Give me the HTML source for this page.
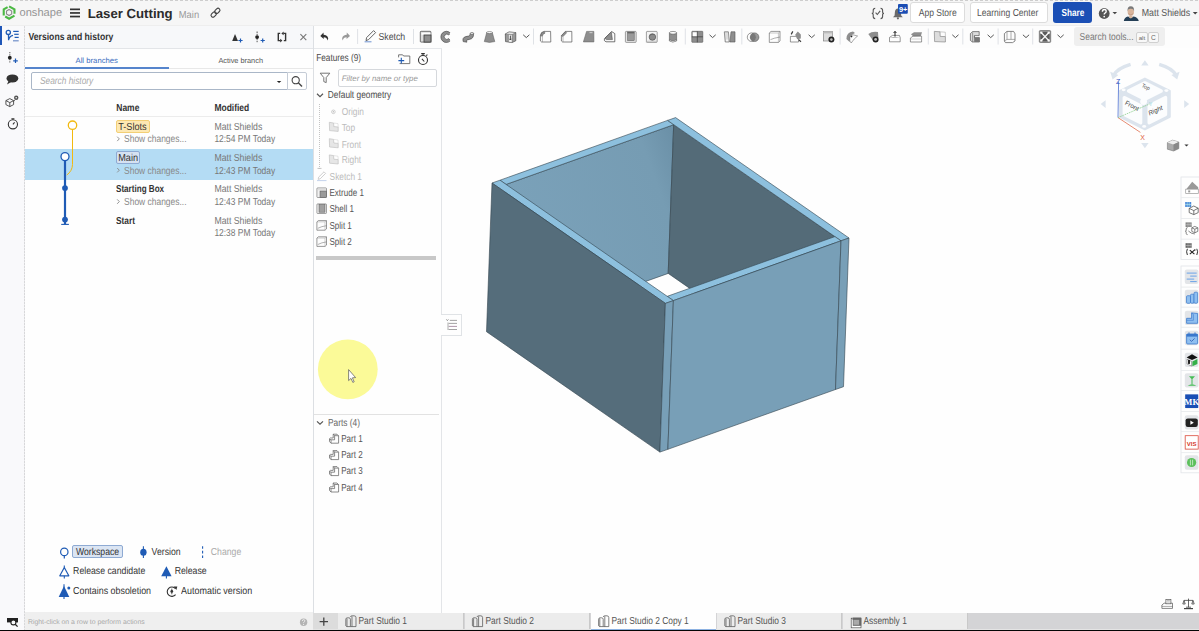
<!DOCTYPE html>
<html><head><meta charset="utf-8">
<style>
html,body{margin:0;padding:0;width:1199px;height:631px;overflow:hidden;background:#fefefe;font-family:"Liberation Sans",sans-serif;}
.t{position:absolute;white-space:nowrap;line-height:1;text-rendering:geometricPrecision;}
.r{position:absolute;}
.s{position:absolute;overflow:visible;}
</style></head><body>

<div class="r" style="left:0px;top:0px;width:1199px;height:25px;background:#f6f6f6;"></div>
<div class="r" style="left:0px;top:0px;width:1199px;height:1px;background:repeating-linear-gradient(90deg,#cdcdcd 0 3px,transparent 3px 5px);"></div>
<div class="r" style="left:0px;top:25px;width:1199px;height:1px;background:#eeeeee;"></div>
<div class="r" style="left:313px;top:26px;width:886px;height:22px;background:#fdfdfd;"></div>
<div class="r" style="left:0px;top:26px;width:24px;height:604px;background:#f9f9fb;"></div>
<div class="r" style="left:24px;top:26px;width:1px;height:604px;background:repeating-linear-gradient(180deg,#d8d8da 0 2px,#ececee 2px 3px);"></div>
<div class="r" style="left:0px;top:26px;width:2px;height:19px;background:#1f56b8;"></div>
<div class="r" style="left:25px;top:26px;width:288px;height:23px;background:#f7f8fa;"></div>
<div class="r" style="left:25px;top:48px;width:288px;height:1px;background:#e3e5e8;"></div>
<div class="r" style="left:25px;top:49px;width:288px;height:564px;background:#fefefe;"></div>
<div class="r" style="left:313px;top:26px;width:1px;height:587px;background:#dcdfe3;"></div>
<div class="r" style="left:25px;top:67px;width:144px;height:2px;background:#5584cc;"></div>
<div class="r" style="left:169px;top:68px;width:144px;height:1px;background:#e8e8e8;"></div>
<div class="r" style="left:31px;top:72px;width:257px;height:18px;background:#fff;border:1px solid #aab7c8;border-radius:2px 0 0 2px;box-sizing:border-box;"></div>
<div class="r" style="left:287px;top:72px;width:20px;height:18px;background:#fff;border:1px solid #c5ccd6;border-radius:0 2px 2px 0;box-sizing:border-box;"></div>
<div class="r" style="left:25px;top:116px;width:288px;height:1px;background:#ececec;"></div>
<div class="r" style="left:25px;top:149px;width:288px;height:31px;background:#b4dcf4;"></div>
<div class="r" style="left:116px;top:120px;width:34px;height:13px;background:#fde8b2;border:1px solid #f2cf76;border-radius:2px;box-sizing:border-box;"></div>
<div class="r" style="left:116px;top:151px;width:24px;height:13px;background:#d5e1f1;border:1px solid #8eaad3;border-radius:2px;box-sizing:border-box;"></div>
<div class="r" style="left:72px;top:545px;width:51px;height:13px;background:#dbe5f3;border:1px solid #8eaad3;border-radius:2px;box-sizing:border-box;"></div>
<div class="r" style="left:25px;top:612px;width:288px;height:18px;background:#efefef;"></div>
<div class="r" style="left:314px;top:48px;width:128px;height:565px;background:#fefefe;"></div>
<div class="r" style="left:441px;top:48px;width:1px;height:565px;background:#e3e5e8;"></div>
<div class="r" style="left:314px;top:48px;width:128px;height:1px;background:#e6e8eb;"></div>
<div class="r" style="left:338px;top:69px;width:99px;height:18px;background:#fff;border:1px solid #d5d8dc;border-radius:2px;box-sizing:border-box;"></div>
<div class="r" style="left:313px;top:613px;width:886px;height:17px;background:#d4d4d6;"></div>
<div class="r" style="left:313px;top:629px;width:886px;height:1px;background:#e4e4e4;"></div>
<div class="r" style="left:0px;top:630px;width:1199px;height:1px;background:#050505;"></div>
<div class="r" style="left:910px;top:2px;width:55px;height:21px;background:#fff;border:1px solid #dcdcdc;border-radius:3px;box-sizing:border-box;"></div>
<div class="r" style="left:970px;top:2px;width:78px;height:21px;background:#fff;border:1px solid #dcdcdc;border-radius:3px;box-sizing:border-box;"></div>
<div class="r" style="left:1053px;top:2px;width:39px;height:21px;background:#1b4fb5;border-radius:3px;"></div>
<div class="r" style="left:1074px;top:27px;width:91px;height:19px;background:#efefef;border-radius:3px;"></div>
<div class="r" style="left:1136px;top:32px;width:12px;height:11px;background:#f8f8f8;border:1px solid #d0d0d0;border-radius:2px;box-sizing:border-box;"></div>
<div class="r" style="left:1148px;top:32px;width:11px;height:11px;background:#f8f8f8;border:1px solid #d0d0d0;border-radius:2px;box-sizing:border-box;"></div>
<svg class="s" style="left:0px;top:0px;" width="1199" height="631" viewBox="0 0 1199 631"><defs><linearGradient id="gb" gradientUnits="userSpaceOnUse" x1="506" y1="184" x2="673" y2="124"><stop offset="0" stop-color="#7aa1b9"/><stop offset="0.8" stop-color="#769cb3"/><stop offset="1" stop-color="#6a8fa6"/></linearGradient></defs><polygon points="506.1,184.4 673.7,124.7 668.2,273.4 500.6,333.1" fill="url(#gb)" stroke="#33434d" stroke-width="0.6" stroke-linejoin="round"/><polygon points="673.7,124.7 834.9,236.6 829.4,385.3 668.2,273.4" fill="#546b78" stroke="#33434d" stroke-width="0.6" stroke-linejoin="round"/><polygon points="500.0,180.2 667.6,120.4 673.7,124.7 506.1,184.4" fill="#8dc0de" stroke="#33434d" stroke-width="0.6" stroke-linejoin="round"/><polygon points="675.6,117.6 849.0,238.0 841.0,240.8 667.6,120.4" fill="#8dc0de" stroke="#33434d" stroke-width="0.6" stroke-linejoin="round"/><polygon points="673.4,300.6 841.0,240.8 834.9,236.6 667.3,296.3" fill="#8dc0de" stroke="#33434d" stroke-width="0.6" stroke-linejoin="round"/><polygon points="492.0,183.0 665.4,303.4 673.4,300.6 500.0,180.2" fill="#8dc0de" stroke="#33434d" stroke-width="0.6" stroke-linejoin="round"/><polygon points="492.0,183.0 665.4,303.4 659.9,452.1 486.5,331.7" fill="#556d7b" stroke="#33434d" stroke-width="0.6" stroke-linejoin="round"/><polygon points="665.4,303.4 673.4,300.6 667.9,449.3 659.9,452.1" fill="#789fb7" stroke="#33434d" stroke-width="0.6" stroke-linejoin="round"/><polygon points="673.4,300.6 841.0,240.8 835.5,389.5 667.9,449.3" fill="#789fb7" stroke="#33434d" stroke-width="0.6" stroke-linejoin="round"/><polygon points="841.0,240.8 849.0,238.0 843.5,386.7 835.5,389.5" fill="#789fb7" stroke="#33434d" stroke-width="0.6" stroke-linejoin="round"/></svg>
<div class="t" style="left:19.50px;top:8.00px;font-size:11.1px;color:#949494;">onshape</div>
<div class="t" style="left:87.70px;top:7.00px;font-size:13.2px;color:#2b2b2b;font-weight:bold;">Laser Cutting</div>
<div class="t" style="left:178.80px;top:10.00px;font-size:9.4px;color:#9a9a9a;transform:scaleY(1.082);transform-origin:0 8px;">Main</div>
<div class="t" style="left:28.50px;top:33.00px;font-size:8.64px;color:#333;font-weight:bold;transform:scaleY(1.178);transform-origin:0 7px;">Versions and history</div>
<div class="t" style="left:75.50px;top:57.00px;font-size:7.72px;color:#3b6dbf;">All branches</div>
<div class="t" style="left:218.40px;top:57.00px;font-size:7.37px;color:#555;">Active branch</div>
<div class="t" style="left:40.00px;top:77.00px;font-size:8.34px;color:#aaa;font-style:italic;transform:scaleY(1.22);transform-origin:0 7px;">Search history</div>
<div class="t" style="left:116.30px;top:104.00px;font-size:8.48px;color:#333;font-weight:bold;transform:scaleY(1.2);transform-origin:0 7px;">Name</div>
<div class="t" style="left:214.40px;top:104.00px;font-size:8.49px;color:#333;font-weight:bold;transform:scaleY(1.198);transform-origin:0 7px;">Modified</div>
<div class="t" style="left:214.40px;top:123.00px;font-size:8.71px;color:#777;transform:scaleY(1.168);transform-origin:0 7px;">Matt Shields</div>
<div class="t" style="left:214.40px;top:135.00px;font-size:8.45px;color:#777;transform:scaleY(1.204);transform-origin:0 7px;">12:54 PM Today</div>
<div class="t" style="left:214.40px;top:154.00px;font-size:8.71px;color:#777;transform:scaleY(1.168);transform-origin:0 7px;">Matt Shields</div>
<div class="t" style="left:214.40px;top:167.00px;font-size:8.45px;color:#777;transform:scaleY(1.204);transform-origin:0 7px;">12:43 PM Today</div>
<div class="t" style="left:214.40px;top:185.00px;font-size:8.71px;color:#777;transform:scaleY(1.168);transform-origin:0 7px;">Matt Shields</div>
<div class="t" style="left:214.40px;top:198.00px;font-size:8.45px;color:#777;transform:scaleY(1.204);transform-origin:0 7px;">12:43 PM Today</div>
<div class="t" style="left:214.40px;top:217.00px;font-size:8.71px;color:#777;transform:scaleY(1.168);transform-origin:0 7px;">Matt Shields</div>
<div class="t" style="left:214.40px;top:229.00px;font-size:8.45px;color:#777;transform:scaleY(1.204);transform-origin:0 7px;">12:38 PM Today</div>
<div class="t" style="left:118.20px;top:123.00px;font-size:9.16px;color:#333;transform:scaleY(1.111);transform-origin:0 7px;">T-Slots</div>
<div class="t" style="left:118.20px;top:154.00px;font-size:9.16px;color:#333;transform:scaleY(1.111);transform-origin:0 7px;">Main</div>
<div class="t" style="left:116.00px;top:186.00px;font-size:8.1px;color:#333;font-weight:bold;transform:scaleY(1.256);transform-origin:0 6px;">Starting Box</div>
<div class="t" style="left:116.00px;top:217.00px;font-size:8.35px;color:#333;font-weight:bold;transform:scaleY(1.218);transform-origin:0 7px;">Start</div>
<div class="t" style="left:124.10px;top:135.00px;font-size:8.45px;color:#888;transform:scaleY(1.204);transform-origin:0 7px;">Show changes...</div>
<div class="t" style="left:124.10px;top:167.00px;font-size:8.45px;color:#888;transform:scaleY(1.204);transform-origin:0 7px;">Show changes...</div>
<div class="t" style="left:124.10px;top:198.00px;font-size:8.45px;color:#888;transform:scaleY(1.204);transform-origin:0 7px;">Show changes...</div>
<div class="t" style="left:75.90px;top:548.00px;font-size:8.7px;color:#333;transform:scaleY(1.169);transform-origin:0 7px;">Workspace</div>
<div class="t" style="left:151.60px;top:548.00px;font-size:8.7px;color:#333;transform:scaleY(1.169);transform-origin:0 7px;">Version</div>
<div class="t" style="left:210.80px;top:548.00px;font-size:8.7px;color:#aaa;transform:scaleY(1.169);transform-origin:0 7px;">Change</div>
<div class="t" style="left:73.10px;top:567.00px;font-size:8.73px;color:#333;transform:scaleY(1.165);transform-origin:0 7px;">Release candidate</div>
<div class="t" style="left:174.70px;top:567.00px;font-size:8.73px;color:#333;transform:scaleY(1.165);transform-origin:0 7px;">Release</div>
<div class="t" style="left:73.10px;top:587.00px;font-size:8.89px;color:#333;transform:scaleY(1.144);transform-origin:0 7px;">Contains obsoletion</div>
<div class="t" style="left:181.00px;top:587.00px;font-size:8.97px;color:#333;transform:scaleY(1.134);transform-origin:0 7px;">Automatic version</div>
<div class="t" style="left:28.00px;top:620.00px;font-size:6.87px;color:#a8a8a8;">Right-click on a row to perform actions</div>
<div class="t" style="left:378.50px;top:33.00px;font-size:8.71px;color:#4a4a4a;transform:scaleY(1.168);transform-origin:0 7px;">Sketch</div>
<div class="t" style="left:316.20px;top:55.00px;font-size:8.24px;color:#4a4a4a;transform:scaleY(1.235);transform-origin:0 6px;">Features (9)</div>
<div class="t" style="left:341.80px;top:75.00px;font-size:7.87px;color:#999;font-style:italic;">Filter by name or type</div>
<div class="t" style="left:327.80px;top:91.00px;font-size:8.33px;color:#4a4a4a;transform:scaleY(1.221);transform-origin:0 7px;">Default geometry</div>
<div class="t" style="left:341.70px;top:108.00px;font-size:8.33px;color:#bbb;transform:scaleY(1.221);transform-origin:0 7px;">Origin</div>
<div class="t" style="left:341.70px;top:124.00px;font-size:8.33px;color:#bbb;transform:scaleY(1.221);transform-origin:0 7px;">Top</div>
<div class="t" style="left:341.70px;top:141.00px;font-size:8.33px;color:#bbb;transform:scaleY(1.221);transform-origin:0 7px;">Front</div>
<div class="t" style="left:341.70px;top:156.00px;font-size:8.33px;color:#bbb;transform:scaleY(1.221);transform-origin:0 7px;">Right</div>
<div class="t" style="left:329.60px;top:173.00px;font-size:8.33px;color:#bbb;transform:scaleY(1.221);transform-origin:0 7px;">Sketch 1</div>
<div class="t" style="left:329.50px;top:190.00px;font-size:8.04px;color:#555;transform:scaleY(1.265);transform-origin:0 6px;">Extrude 1</div>
<div class="t" style="left:329.50px;top:206.00px;font-size:8.04px;color:#555;transform:scaleY(1.265);transform-origin:0 6px;">Shell 1</div>
<div class="t" style="left:329.50px;top:223.00px;font-size:8.04px;color:#555;transform:scaleY(1.265);transform-origin:0 6px;">Split 1</div>
<div class="t" style="left:329.50px;top:239.00px;font-size:8.04px;color:#555;transform:scaleY(1.265);transform-origin:0 6px;">Split 2</div>
<div class="r" style="left:316px;top:256px;width:120px;height:4px;background:#c8c8c8;"></div>
<div class="r" style="left:314px;top:414px;width:125px;height:1px;background:#e2e2e2;"></div>
<div class="t" style="left:328.00px;top:419.00px;font-size:8.33px;color:#666;transform:scaleY(1.221);transform-origin:0 7px;">Parts (4)</div>
<div class="t" style="left:341.20px;top:436.00px;font-size:8.04px;color:#555;transform:scaleY(1.265);transform-origin:0 6px;">Part 1</div>
<div class="t" style="left:341.20px;top:452.00px;font-size:8.04px;color:#555;transform:scaleY(1.265);transform-origin:0 6px;">Part 2</div>
<div class="t" style="left:341.20px;top:468.00px;font-size:8.04px;color:#555;transform:scaleY(1.265);transform-origin:0 6px;">Part 3</div>
<div class="t" style="left:341.20px;top:485.00px;font-size:8.04px;color:#555;transform:scaleY(1.265);transform-origin:0 6px;">Part 4</div>
<div class="r" style="left:313px;top:613px;width:25px;height:16px;background:#dcdcdc;"></div>
<div class="r" style="left:338px;top:613px;width:126px;height:16px;background:#ececec;"></div>
<div class="r" style="left:463px;top:613px;width:1px;height:16px;background:#c9c9c9;"></div>
<div class="t" style="left:358.50px;top:617.00px;font-size:8.4px;color:#555;transform:scaleY(1.211);transform-origin:0 7px;">Part Studio 1</div>
<div class="r" style="left:465px;top:613px;width:125px;height:16px;background:#ececec;"></div>
<div class="r" style="left:589px;top:613px;width:1px;height:16px;background:#c9c9c9;"></div>
<div class="t" style="left:485.50px;top:617.00px;font-size:8.4px;color:#555;transform:scaleY(1.211);transform-origin:0 7px;">Part Studio 2</div>
<div class="r" style="left:591px;top:613px;width:125px;height:16px;background:#fefefe;"></div>
<div class="t" style="left:611.50px;top:617.00px;font-size:8.4px;color:#555;transform:scaleY(1.211);transform-origin:0 7px;">Part Studio 2 Copy 1</div>
<div class="r" style="left:717px;top:613px;width:125px;height:16px;background:#ececec;"></div>
<div class="r" style="left:841px;top:613px;width:1px;height:16px;background:#c9c9c9;"></div>
<div class="t" style="left:737.50px;top:617.00px;font-size:8.4px;color:#555;transform:scaleY(1.211);transform-origin:0 7px;">Part Studio 3</div>
<div class="r" style="left:843px;top:613px;width:125px;height:16px;background:#ececec;"></div>
<div class="r" style="left:967px;top:613px;width:1px;height:16px;background:#c9c9c9;"></div>
<div class="t" style="left:863.50px;top:617.00px;font-size:8.4px;color:#555;transform:scaleY(1.211);transform-origin:0 7px;">Assembly 1</div>
<div class="r" style="left:591px;top:629px;width:125px;height:1px;background:#8db2e2;"></div>
<div class="t" style="left:918.70px;top:9.00px;font-size:8.56px;color:#555;transform:scaleY(1.189);transform-origin:0 7px;">App Store</div>
<div class="t" style="left:977.00px;top:9.00px;font-size:8.56px;color:#555;transform:scaleY(1.189);transform-origin:0 7px;">Learning Center</div>
<div class="t" style="left:1141.70px;top:9.00px;font-size:8.82px;color:#555;transform:scaleY(1.154);transform-origin:0 7px;">Matt Shields</div>
<div class="t" style="left:1061.50px;top:10.00px;font-size:8.17px;color:#fff;font-weight:bold;transform:scaleY(1.245);transform-origin:0 6px;">Share</div>
<div class="t" style="left:1079.60px;top:33.00px;font-size:8.45px;color:#777;transform:scaleY(1.204);transform-origin:0 7px;">Search tools...</div>
<svg class="s" style="left:0px;top:0px;" width="1199" height="631" viewBox="0 0 1199 631"><polyline points="9.10,6.30 14.47,9.40 14.47,13.86" fill="none" stroke="#4cb944" stroke-width="2.1" stroke-linejoin="miter"/><polyline points="14.47,15.60 9.10,18.70 5.23,16.47" fill="none" stroke="#4cb944" stroke-width="2.1" stroke-linejoin="miter"/><polyline points="3.73,15.60 3.73,9.40 7.60,7.17" fill="none" stroke="#4cb944" stroke-width="2.1" stroke-linejoin="miter"/><polygon points="9.10,9.50 11.70,11.00 11.70,14.00 9.10,15.50 6.50,14.00 6.50,11.00" fill="none" stroke="#8a8a8a" stroke-width="1.1"/><rect x="70" y="8.5" width="10" height="1.7" fill="#333"/><rect x="70" y="12.1" width="10" height="1.7" fill="#333"/><rect x="70" y="15.7" width="10" height="1.7" fill="#333"/><g transform="translate(215.5,12.7) rotate(-45)" fill="none" stroke="#444" stroke-width="1.1"><rect x="-5.5" y="-1.9" width="6" height="3.8" rx="1.9"/><rect x="-0.5" y="-1.9" width="6" height="3.8" rx="1.9"/></g><path d="M875.2,8.4 Q873.2,8.4 873.2,10.4 L873.2,12.2 Q873.2,13.4 871.8,13.4 Q873.2,13.4 873.2,14.6 L873.2,16.6 Q873.2,18.6 875.2,18.6 M880.6,8.4 Q882.6,8.4 882.6,10.4 L882.6,12.2 Q882.6,13.4 884,13.4 Q882.6,13.4 882.6,14.6 L882.6,16.6 Q882.6,18.6 880.6,18.6" fill="none" stroke="#555" stroke-width="1.1"/><polyline points="875.6,12.6 877.3,14.5 880.2,10.8" fill="none" stroke="#555" stroke-width="1.1"/><path d="M893,17.3 L894.6,15.6 L894.9,12 Q895.2,8.8 897.9,8.6 Q900.6,8.8 900.9,12 L901.2,15.6 L902.8,17.3 Z" fill="#6a6a6a"/><circle cx="897.9" cy="18.3" r="1.1" fill="#6a6a6a"/><rect x="898" y="4" width="9.8" height="9.8" rx="1" fill="#1b4db3"/><text x="899" y="11.7" font-size="7.4" font-weight="bold" fill="#fff" font-family="Liberation Sans">9+</text><circle cx="1104.2" cy="13.5" r="5.4" fill="#555"/><path d="M1102.4,11.7 Q1102.4,9.5 1104.3,9.5 Q1106.2,9.5 1106.2,11.3 Q1106.2,12.5 1104.9,13.1 Q1104.2,13.4 1104.2,14.6" fill="none" stroke="#fff" stroke-width="1.35"/><circle cx="1104.2" cy="16.6" r="0.85" fill="#fff"/><polygon points="1112.5,12 1117.1,12 1114.8,14.3" fill="#444"/><path d="M1123.8,21 Q1124.4,17.4 1128,16.6 L1130.8,17.8 L1133.6,16.6 Q1137.8,17.4 1138.8,21 Z" fill="#243f56"/><path d="M1129.2,15.6 L1132.4,15.6 L1132.6,17.6 L1130.8,18.6 L1129,17.6 Z" fill="#d8b8a0"/><ellipse cx="1130.8" cy="11.8" rx="3.2" ry="3.9" fill="#d9b59c"/><path d="M1127.5,11.2 Q1127.2,6.4 1130.8,6.3 Q1134.4,6.4 1134.1,11.2 Q1133.6,8.6 1130.8,8.8 Q1128,8.6 1127.5,11.2 Z" fill="#7a7a7a"/><path d="M1128.4,13.6 Q1130.8,16.4 1133.2,13.6" fill="none" stroke="#b08a74" stroke-width="0.6"/><polygon points="1192.8,12 1197.6,12 1195.2,14.4" fill="#444"/><g fill="none" stroke="#1f5bb5" stroke-width="1.3"><circle cx="8.3" cy="32.4" r="2.1"/><path d="M8.5,34.5 L8.6,40.2 M8.6,40 Q9,36.5 13,35.4"/></g><g stroke="#1f5bb5" stroke-width="1.2"><line x1="13.2" y1="31.4" x2="18.7" y2="31.4"/><line x1="14.2" y1="34.3" x2="18.7" y2="34.3"/><line x1="14.6" y1="37.4" x2="18.7" y2="37.4"/><line x1="13" y1="40.8" x2="18.7" y2="40.8" stroke="#6f8fc9"/></g><line x1="9.8" y1="52" x2="9.8" y2="63.5" stroke="#777" stroke-width="1.2" stroke-dasharray="1.3,1"/><circle cx="9.8" cy="57.7" r="1.9" fill="#222"/><path d="M13.2,60.8 H17.8 M15.5,58.5 V63.1" stroke="#1f5bb5" stroke-width="1.2"/><ellipse cx="12.4" cy="78.4" rx="5.9" ry="4.0" fill="#333"/><polygon points="8.5,81 7,84.4 11.2,82" fill="#333"/><g fill="none" stroke="#444" stroke-width="0.9" stroke-linejoin="round"><path d="M5.9,100.6 L9.8,98.6 L13.6,100.6 L13.6,104.6 L9.8,106.6 L5.9,104.6 Z M5.9,100.6 L9.8,102.6 L13.6,100.6 M9.8,102.6 V106.6"/></g><circle cx="16.2" cy="97.8" r="2.2" fill="#555"/><circle cx="16.2" cy="97.8" r="0.8" fill="#f6f7f9"/><path d="M13.6,101.5 L15,99.8" stroke="#444" stroke-width="0.8"/><g fill="none" stroke="#333" stroke-width="1.1"><circle cx="12.9" cy="124.3" r="4.6"/><path d="M11.4,118.8 H14.4 M12.9,118.8 V119.7 M12.9,124.3 L14.6,122.4"/></g><rect x="7" y="618" width="11" height="4.4" fill="#222"/><circle cx="13.4" cy="622.4" r="2.5" fill="#f7f8fa" stroke="#222" stroke-width="1.1"/><line x1="15.2" y1="624.3" x2="17.6" y2="626.6" stroke="#222" stroke-width="1.3"/><polygon points="235,34 238,41 232.2,41" fill="#333"/><path d="M238.4,40.5 H242.6 M240.5,38.4 V42.6" stroke="#1f5bb5" stroke-width="1.2"/><line x1="257.1" y1="31.5" x2="257.1" y2="42.7" stroke="#555" stroke-width="1" stroke-dasharray="1.5,0.8"/><circle cx="257.1" cy="37.1" r="1.9" fill="#222"/><path d="M260.6,40.5 H264.8 M262.7,38.4 V42.6" stroke="#1f5bb5" stroke-width="1.2"/><g fill="none" stroke="#333" stroke-width="1.4"><path d="M280.2,33.4 H278.3 V40.6 H280.4"/><path d="M283.4,33.4 H285.6 V40.6 H283.8"/></g><polygon points="280.2,38.8 282.4,40.6 280.2,42.4" fill="#333"/><polygon points="283.6,31.6 281.4,33.4 283.6,35.2" fill="#333"/><path d="M300.4,34.2 L306.3,40.1 M306.3,34.2 L300.4,40.1" stroke="#777" stroke-width="1.1"/><polygon points="276.8,80.9 281.3,80.9 279.05,83.1" fill="#222"/><circle cx="295.7" cy="80.2" r="3.6" fill="none" stroke="#444" stroke-width="1.1"/><line x1="298.3" y1="82.8" x2="302" y2="86.4" stroke="#444" stroke-width="1.4"/><path d="M72.5,129.5 V164.5 Q72.3,171 66.8,175" fill="none" stroke="#f2b90f" stroke-width="1"/><circle cx="72.5" cy="125.2" r="4.2" fill="#fff" stroke="#f2b90f" stroke-width="1.3"/><line x1="65" y1="160.5" x2="65" y2="224.3" stroke="#1f5bb5" stroke-width="2.2"/><circle cx="65" cy="156.6" r="4" fill="#fff" stroke="#1f5bb5" stroke-width="1.3"/><circle cx="65" cy="188.1" r="2.9" fill="#1f5bb5"/><circle cx="65" cy="219.6" r="2.9" fill="#1f5bb5"/><line x1="61.2" y1="224.4" x2="68.9" y2="224.4" stroke="#1f5bb5" stroke-width="1.1"/><polyline points="117.2,136.70000000000002 119.3,138.9 117.2,141.1" fill="none" stroke="#888" stroke-width="0.9"/><polyline points="117.2,168.0 119.3,170.2 117.2,172.39999999999998" fill="none" stroke="#888" stroke-width="0.9"/><polyline points="117.2,199.4 119.3,201.6 117.2,203.79999999999998" fill="none" stroke="#888" stroke-width="0.9"/><circle cx="64.3" cy="551.9" r="3.7" fill="none" stroke="#1f5bb5" stroke-width="1.2"/><line x1="64.3" y1="555.6" x2="64.3" y2="558.6" stroke="#1f5bb5" stroke-width="1.2"/><line x1="143.4" y1="546.2" x2="143.4" y2="558.1" stroke="#1f5bb5" stroke-width="1.1"/><ellipse cx="143.4" cy="552.2" rx="3.2" ry="3.5" fill="#1f5bb5"/><line x1="202.6" y1="546.2" x2="202.6" y2="558.6" stroke="#1f5bb5" stroke-width="1.1" stroke-dasharray="2.6,2"/><polygon points="64.3,567.5 68.8,575.8 59.8,575.8" fill="none" stroke="#1f5bb5" stroke-width="1.2" stroke-linejoin="round"/><line x1="64.3" y1="565.5" x2="64.3" y2="567.6" stroke="#1f5bb5" stroke-width="1.1"/><line x1="64.3" y1="575.8" x2="64.3" y2="578.6" stroke="#1f5bb5" stroke-width="1.1"/><polygon points="166.4,566.2 171.6,576.2 161.2,576.2" fill="#1f5bb5"/><line x1="166.4" y1="576" x2="166.4" y2="578.6" stroke="#1f5bb5" stroke-width="1.1"/><polygon points="64,586.1 69.3,597 58.7,597" fill="#1f5bb5"/><line x1="64" y1="584.3" x2="64" y2="599" stroke="#1f5bb5" stroke-width="1.1"/><circle cx="68.8" cy="588" r="1.5" fill="#1f5bb5"/><path d="M175.5,588.6 A4.7,4.7 0 1 0 175.6,594.6" fill="none" stroke="#333" stroke-width="1.1"/><polygon points="173.6,586.4 177.3,586.6 176.4,590" fill="#333"/><circle cx="171.8" cy="591.4" r="1.4" fill="#333"/><line x1="171.8" y1="588.6" x2="171.8" y2="594.3" stroke="#333" stroke-width="0.8"/><circle cx="303.6" cy="622.2" r="3.7" fill="#b4b4b4"/><path d="M302.4,621 Q302.4,619.6 303.6,619.6 Q304.8,619.6 304.8,620.8 Q304.8,621.6 304,622 Q303.6,622.2 303.6,623" fill="none" stroke="#efefef" stroke-width="0.9"/><circle cx="303.6" cy="624.4" r="0.55" fill="#efefef"/></svg>
<div class="r" style="left:441px;top:314px;width:21px;height:22px;background:#fefefe;border:1px solid #e0e3e6;border-left:none;box-sizing:border-box;"></div>
<svg class="s" style="left:0px;top:0px;" width="1199" height="631" viewBox="0 0 1199 631"><path d="M322,34.8 Q327.5,34.3 328.2,38.5 L327.6,40.6 Q326.8,36.7 322.8,37.3 Z" fill="#333"/><polygon points="320.3,35.9 323.5,32.6 323.8,39" fill="#333"/><path d="M348.3,34.8 Q342.8,34.3 342.1,38.5 L342.7,40.6 Q343.5,36.7 347.5,37.3 Z" fill="#999"/><polygon points="350,35.9 346.8,32.6 346.5,39" fill="#999"/><rect x="357.1" y="29" width="1" height="15" fill="#dfe2e6"/><path d="M366,40.6 L366.6,37.6 L373.6,30.6 L375.6,32.6 L368.6,39.6 Z" fill="none" stroke="#555" stroke-width="0.9" stroke-linejoin="round"/><line x1="364.6" y1="41.8" x2="371.5" y2="41.8" stroke="#4a78c8" stroke-width="0.8"/><rect x="413.0" y="29" width="1" height="15" fill="#dfe2e6"/><g transform="translate(420,31)"><rect x="0.3" y="0.3" width="10.6" height="10.8" rx="0.8" fill="#dcdcdc" stroke="#3a3a3a" stroke-width="0.7"/><rect x="1.5" y="1.8" width="9" height="2" fill="#fdfdfd"/><rect x="4" y="4" width="7" height="7.1" fill="#8e8e8e" stroke="#3a3a3a" stroke-width="0.8"/></g><g transform="translate(441,31)"><path d="M9.5,2.2 A5.5,5.6 0 1 0 9.5,9.6 L7.7,7.6 A2.6,2.6 0 1 1 7.7,4.0 Z" fill="#8e8e8e" stroke="#3a3a3a" stroke-width="0.6"/><circle cx="9.6" cy="2.7" r="0.9" fill="#fdfdfd"/><circle cx="9.6" cy="9.1" r="0.9" fill="#fdfdfd"/></g><g transform="translate(462,31)"><path d="M1.2,10.6 Q0,6.5 3.8,5.6 L6.8,5 Q8.2,4.6 8.3,2.4 L11.6,2.4 Q11.8,7.6 7.8,8.3 L5.2,8.9 Q4.2,9.3 4.8,11.2 Z" fill="#8e8e8e" stroke="#3a3a3a" stroke-width="0.6"/><ellipse cx="9.95" cy="2.4" rx="1.7" ry="0.9" fill="#fdfdfd" stroke="#3a3a3a" stroke-width="0.5"/></g><g transform="translate(484,31)"><path d="M2.8,1.2 L8.2,1.2 L10.8,10.6 Q5.5,12.2 0.3,10.6 Z" fill="#8e8e8e" stroke="#555" stroke-width="0.5"/><ellipse cx="5.5" cy="1.6" rx="2.8" ry="1" fill="#fdfdfd" stroke="#555" stroke-width="0.5"/></g><g transform="translate(505,31)"><path d="M0.3,3 L4,1 L10.8,1.6 L10.8,9.8 L7,11.6 L0.5,10.6 Z" fill="#9a9a9a" stroke="#3a3a3a" stroke-width="0.6"/><path d="M0.3,3 L4,1 L10.8,1.6 L7,3.6 Z" fill="#e8e8e8" stroke="#555" stroke-width="0.4"/><path d="M3.6,3.4 L7,3.6 L7,11.6 L3.6,11 Z" fill="#f4f4f4" stroke="#666" stroke-width="0.4"/><path d="M5.4,4.6 V9 M4.4,7.8 L5.4,9 L6.4,7.8" stroke="#3a3a3a" stroke-width="0.9" fill="none"/></g><polyline points="523.2,34.8 526.3,37.6 529.4,34.8" fill="none" stroke="#555" stroke-width="1"/><rect x="533.0" y="28.5" width="1" height="16.0" fill="#dfe2e6"/><g transform="translate(540,31)"><path d="M0.4,4.6 Q0.8,0.6 4.4,0.4 L10.6,0.4 L10.8,11 L1.6,11 L0.4,10 Z" fill="#fdfdfd" stroke="#555" stroke-width="0.7"/><path d="M0.5,4.8 Q1,1 4.4,0.5 L5,2.2 Q2.6,2.6 2.4,5.2 Z" fill="#8e8e8e" stroke="#555" stroke-width="0.5"/><line x1="2.4" y1="5.2" x2="2.4" y2="11" stroke="#777" stroke-width="0.5"/></g><g transform="translate(561,31)"><path d="M0.4,4.6 L4.4,0.4 L10.8,0.4 L10.9,11 L1.6,11 L0.4,10 Z" fill="#fdfdfd" stroke="#555" stroke-width="0.7"/><path d="M0.5,4.6 L4.4,0.5 L5.6,1.8 L2,5.6 Z" fill="#8e8e8e" stroke="#555" stroke-width="0.5"/><line x1="2" y1="5.6" x2="2" y2="11" stroke="#777" stroke-width="0.5"/></g><g transform="translate(583,31)"><path d="M3.6,0.4 L10.8,0.4 L10.9,10.9 L0.4,10.9 Z" fill="#8e8e8e" stroke="#666" stroke-width="0.6"/><rect x="6.5" y="1" width="3" height="1.2" fill="#c8c8c8"/></g><g transform="translate(604,31)"><path d="M7.6,0.5 L10.8,2.6 L10.8,10.8 L2,10.8 L0.4,9.6 L0.4,7.6 Z" fill="#fdfdfd" stroke="#3a3a3a" stroke-width="0.7"/><path d="M1,7.4 L7.4,1.2 L8.4,8.6 L2.4,8.6 Z" fill="#8e8e8e" stroke="#3a3a3a" stroke-width="0.5"/></g><g transform="translate(625,31)"><rect x="0.4" y="0.4" width="10.8" height="11" rx="0.8" fill="#e4e4e4" stroke="#666" stroke-width="0.6"/><rect x="2.6" y="1" width="6.6" height="8.6" fill="#9a9a9a" stroke="#555" stroke-width="0.5"/><rect x="2.6" y="1" width="6.6" height="1.4" fill="#666"/></g><g transform="translate(646,31)"><rect x="0.4" y="0.4" width="10.8" height="11" rx="0.8" fill="#f4f4f4" stroke="#666" stroke-width="0.6"/><path d="M0.4,1.6 L1.6,0.4 M0.4,11.4 L1.6,10.2 L11.2,10.2" fill="none" stroke="#888" stroke-width="0.4"/><circle cx="6.4" cy="6" r="3.3" fill="#8a8a8a" stroke="#444" stroke-width="0.6"/><path d="M4.4,4.6 A2.4,2.4 0 0 1 7.6,3.6" fill="none" stroke="#555" stroke-width="0.5"/></g><g transform="translate(669,31)"><path d="M0.4,1.8 L0.4,9.6 Q3.8,12 7.6,9.6 L7.6,1.8 Z" fill="#8e8e8e" stroke="#555" stroke-width="0.6"/><ellipse cx="4" cy="1.8" rx="3.6" ry="1.4" fill="#fdfdfd" stroke="#555" stroke-width="0.6"/><path d="M0.4,8.8 Q3.8,11 7.6,8.8 L7.6,10 Q3.8,12.2 0.4,10 Z" fill="#fdfdfd" stroke="#555" stroke-width="0.5"/></g><rect x="684.8" y="28.5" width="1" height="16.0" fill="#dfe2e6"/><g transform="translate(691.5,31)"><rect x="0.3" y="0.3" width="11" height="11" rx="0.6" fill="#8e8e8e" stroke="#555" stroke-width="0.6"/><rect x="1.2" y="1.2" width="4.5" height="4.5" fill="#fdfdfd"/><path d="M5.8,0.3 V11.3 M0.3,5.8 H11.3" stroke="#3a3a3a" stroke-width="0.7"/></g><polyline points="709.5,34.8 712.6,37.6 715.7,34.8" fill="none" stroke="#555" stroke-width="1"/><g transform="translate(724,31)"><path d="M0.3,0.8 L4.4,0.8 L5.4,11 L1.2,11 Z" fill="#dcdcdc" stroke="#555" stroke-width="0.6"/><path d="M7,0.8 L11,0.8 L11,11 L6,11 Z" fill="#8e8e8e" stroke="#555" stroke-width="0.6"/><rect x="2.2" y="8.6" width="1.6" height="1.6" fill="#fdfdfd"/></g><rect x="741.3" y="28.5" width="1" height="16.0" fill="#dfe2e6"/><g transform="translate(747,31)"><circle cx="4.6" cy="6.2" r="4.3" fill="#fdfdfd" stroke="#555" stroke-width="0.6"/><circle cx="7.6" cy="6.2" r="4.3" fill="#8e8e8e" stroke="#555" stroke-width="0.6" fill-opacity="0.9"/><path d="M6.1,2.2 A4.3,4.3 0 0 1 6.1,10.2 A4.3,4.3 0 0 1 6.1,2.2" fill="#777"/></g><g transform="translate(769,31)"><path d="M0.3,2 L2,0.4 L11,0.4 L11,10 L9.4,11.4 L0.3,11.4 Z" fill="#fdfdfd" stroke="#555" stroke-width="0.6"/><path d="M1.5,8.6 Q5,7 11,6" fill="none" stroke="#777" stroke-width="0.6"/><path d="M0.3,2 L9.4,2 L11,0.4 M9.4,2 V11.4" fill="none" stroke="#777" stroke-width="0.4"/></g><g transform="translate(790,31)"><path d="M0.4,5.4 L8.6,5.4 L8.6,11 L0.4,11 Z" fill="#fdfdfd" stroke="#555" stroke-width="0.6"/><path d="M5.2,3.8 L7.8,0.6 L10.8,3.4 L10.8,7.4 L7.2,8.2 Z" fill="#8e8e8e"/><path d="M2.8,0.4 L1.2,3.4 M8.6,8.6 L11,10.8" stroke="#3a3a3a" stroke-width="1.2"/></g><polyline points="808.6,34.8 811.7,37.6 814.8,34.8" fill="none" stroke="#555" stroke-width="1"/><g transform="translate(823,31)"><rect x="0.3" y="0.4" width="9" height="9.6" fill="#dcdcdc" stroke="#777" stroke-width="0.6"/><rect x="0.3" y="0.4" width="9" height="2" fill="#bbb"/><circle cx="8.4" cy="8.6" r="3" fill="#222"/><circle cx="8.4" cy="8.6" r="1.3" fill="#bbb"/></g><rect x="839.6" y="28.5" width="1" height="16.0" fill="#dfe2e6"/><g transform="translate(846,31)"><path d="M0.4,8 Q0.4,1 7,0.4 L9,2 Q4,4 3.6,11 Z" fill="#8e8e8e"/><path d="M3.8,6 L7,3.8 L11.6,5 L8.2,8 L5.2,12 L3.8,10 Z" fill="#fdfdfd" stroke="#555" stroke-width="0.5"/><circle cx="5.6" cy="5.6" r="0.8" fill="#222"/></g><g transform="translate(868,31)"><path d="M0.3,3 Q4,0 10,1 L10.4,7 L5,9.4 Z" fill="#8e8e8e"/><circle cx="7.6" cy="8.4" r="3" fill="#222"/><circle cx="7.6" cy="8.4" r="1.4" fill="#bbb"/></g><g transform="translate(889,31)"><path d="M0.5,6.4 L3.5,4.4 L10.4,4.4 L11.2,6.6 L11.2,10.8 L0.5,10.8 Z" fill="#fdfdfd" stroke="#555" stroke-width="0.6"/><path d="M0.6,6.6 Q4,5.4 11,7" fill="#8e8e8e"/><path d="M6,0.4 V5.6 M4.6,2 L6,0.4 L7.4,2" stroke="#222" stroke-width="1" fill="none"/></g><g transform="translate(910,31)"><path d="M1,3.2 L4,1.2 L12,1.2 L10.8,5 L3.8,6 Z" fill="#8e8e8e"/><path d="M0.4,7 L3,5.2 L11.6,5.2 L11.6,11 L0.4,11 Z" fill="#fdfdfd" stroke="#555" stroke-width="0.6"/><path d="M0.5,8 L11.5,8" stroke="#999" stroke-width="0.4"/></g><rect x="927.8" y="28.5" width="1" height="16.0" fill="#dfe2e6"/><g transform="translate(934,31)"><path d="M0.3,0.4 L6,0.8 L6.2,5.4 L11.4,5.6 L11.4,11 L0.6,10.6 Z" fill="#dcdcdc" stroke="#777" stroke-width="0.6"/><path d="M6,0.8 L11.3,1.2 L11.4,5.6" fill="none" stroke="#999" stroke-width="0.5"/></g><polyline points="952.3,34.8 955.4,37.6 958.5,34.8" fill="none" stroke="#555" stroke-width="1"/><rect x="962.3" y="28.5" width="1" height="16.0" fill="#dfe2e6"/><g transform="translate(970,31)"><path d="M0.4,2.6 L2.6,0.6 L9.2,0.6 L9.2,4.6 L4.4,4.6 L4.4,6.6 L9.4,6.6 L9.4,11 L2.4,11 L0.4,9.4 Z" fill="#dcdcdc" stroke="#3a3a3a" stroke-width="0.6"/><path d="M2.6,1.4 L2.6,11 M4.4,4.6 L4.4,10.6" stroke="#666" stroke-width="0.6"/><rect x="4.4" y="6.6" width="5" height="4.4" fill="#777"/></g><polyline points="987.6,34.8 990.7,37.6 993.8,34.8" fill="none" stroke="#555" stroke-width="1"/><rect x="997.6" y="28.5" width="1" height="16.0" fill="#dfe2e6"/><g transform="translate(1004,31)"><path d="M0.4,2.6 L3,0.4 L9.6,0.4 L11,2.8 L11,10 L8.6,11.6 L1.4,11.6 L0.4,10 Z" fill="#fdfdfd" stroke="#555" stroke-width="0.7"/><path d="M3,0.4 L3,8.4 L0.4,10 M3,8.4 L11,8.4 M7,0.4 V8.4" stroke="#777" stroke-width="0.6" fill="none"/></g><polyline points="1022.9,34.8 1026.0,37.6 1029.1,34.8" fill="none" stroke="#555" stroke-width="1"/><rect x="1032.2" y="28.5" width="1" height="16.0" fill="#dfe2e6"/><g transform="translate(1038.8,30)"><rect x="0.5" y="0.5" width="11.4" height="12" rx="1" fill="#9a9a9a" stroke="#555" stroke-width="0.6"/><rect x="1.6" y="1.8" width="9.2" height="9.6" fill="#5a5a5a"/><path d="M1.8,2 L10.6,11.2 M10.6,2 L1.8,11.2" stroke="#f4f4f4" stroke-width="1.3"/><rect x="1.6" y="1.8" width="2" height="2" fill="#fafafa"/><rect x="8.8" y="1.8" width="2" height="2" fill="#fafafa"/><rect x="1.6" y="9.4" width="2" height="2" fill="#fafafa"/><rect x="8.8" y="9.4" width="2" height="2" fill="#fafafa"/></g><polyline points="1057.5,34.8 1060.6,37.6 1063.7,34.8" fill="none" stroke="#555" stroke-width="1"/><text x="1141.9" y="40.2" font-size="6.2" fill="#666" text-anchor="middle" font-family="Liberation Sans">alt</text><text x="1153.4" y="40.3" font-size="6.6" fill="#666" text-anchor="middle" font-family="Liberation Sans">C</text><g fill="none" stroke="#555" stroke-width="0.8"><path d="M398.6,57.4 L398.6,54.8 L402.6,54.8 L403.6,56 L409.8,56 L409.8,63.6 L399.6,63.6"/></g><path d="M398.4,60.6 H404.2 M401.3,57.7 V63.5" stroke="#1f5bb5" stroke-width="1.1"/><g fill="none" stroke="#333" stroke-width="1.1"><circle cx="423" cy="60" r="4.5"/><path d="M421.2,53.6 H424.8 M423,53.6 V55.5 M421.9,58.9 L424.3,61.5 M426.2,55.6 L427.4,54.6"/></g><path d="M320.2,73.2 L329.8,73.2 L326.2,77.6 L326.2,82.6 L323.8,81.6 L323.8,77.6 Z" fill="none" stroke="#666" stroke-width="0.9" stroke-linejoin="round"/><polyline points="317,93.8 320,96.6 323,93.8" fill="none" stroke="#555" stroke-width="1.2"/><polyline points="317,421.4 320,424.2 323,421.4" fill="none" stroke="#555" stroke-width="1.2"/><line x1="319.5" y1="104" x2="319.5" y2="168.4" stroke="#aaa" stroke-width="0.7" stroke-dasharray="1,1"/><line x1="317.5" y1="168.4" x2="321.5" y2="168.4" stroke="#aaa" stroke-width="0.7"/><circle cx="333.4" cy="111.8" r="1.8" fill="none" stroke="#bbb" stroke-width="0.7"/><circle cx="333.4" cy="111.8" r="0.7" fill="#bbb"/><g transform="translate(329,122.0)"><path d="M0.3,0.3 L4.6,1 L4.8,4.6 L9.2,5 L9.2,9.4 L0.6,8.6 Z" fill="#e6e6e6" stroke="#bbb" stroke-width="0.6"/><path d="M4.6,1 L9,1.6 L9.2,5" fill="none" stroke="#ccc" stroke-width="0.5"/></g><g transform="translate(329,138.4)"><path d="M0.3,0.3 L4.6,1 L4.8,4.6 L9.2,5 L9.2,9.4 L0.6,8.6 Z" fill="#e6e6e6" stroke="#bbb" stroke-width="0.6"/><path d="M4.6,1 L9,1.6 L9.2,5" fill="none" stroke="#ccc" stroke-width="0.5"/></g><g transform="translate(329,154.6)"><path d="M0.3,0.3 L4.6,1 L4.8,4.6 L9.2,5 L9.2,9.4 L0.6,8.6 Z" fill="#e6e6e6" stroke="#bbb" stroke-width="0.6"/><path d="M4.6,1 L9,1.6 L9.2,5" fill="none" stroke="#ccc" stroke-width="0.5"/></g><path d="M318.2,179.4 L318.6,177.2 L324,171.8 L325.6,173.4 L320.2,178.8 Z" fill="none" stroke="#bbb" stroke-width="0.7"/><line x1="317" y1="180.6" x2="326.5" y2="180.6" stroke="#9ab2dd" stroke-width="0.6"/><g transform="translate(316.6,187.6)"><rect x="0.3" y="0.3" width="9.6" height="9.6" rx="0.8" fill="#f2f2f2" stroke="#666" stroke-width="0.6"/><rect x="1.2" y="1.2" width="8" height="1.4" fill="#ddd"/><rect x="3.4" y="3.4" width="6.5" height="6.5" fill="#9a9a9a" stroke="#555" stroke-width="0.5"/></g><g transform="translate(316.6,203.6)"><rect x="0.3" y="0.3" width="9.6" height="9.6" rx="0.8" fill="#f2f2f2" stroke="#666" stroke-width="0.6"/><rect x="2.4" y="1" width="6" height="7.6" fill="#a0a0a0" stroke="#555" stroke-width="0.5"/></g><g transform="translate(316.6,220.3)"><path d="M0.3,1.6 L1.8,0.3 L9.9,0.3 L9.9,8.6 L8.4,9.9 L0.3,9.9 Z" fill="#fdfdfd" stroke="#555" stroke-width="0.6"/><path d="M1.2,8 Q5,6 9.9,5.4" fill="none" stroke="#666" stroke-width="0.5"/><path d="M0.3,1.6 L8.4,1.6 L9.9,0.3 M8.4,1.6 V9.9" fill="none" stroke="#888" stroke-width="0.4"/></g><g transform="translate(316.6,236.5)"><path d="M0.3,1.6 L1.8,0.3 L9.9,0.3 L9.9,8.6 L8.4,9.9 L0.3,9.9 Z" fill="#fdfdfd" stroke="#555" stroke-width="0.6"/><path d="M1.2,8 Q5,6 9.9,5.4" fill="none" stroke="#666" stroke-width="0.5"/><path d="M0.3,1.6 L8.4,1.6 L9.9,0.3 M8.4,1.6 V9.9" fill="none" stroke="#888" stroke-width="0.4"/></g><g transform="translate(329.2,433.8)" fill="none" stroke="#666" stroke-width="0.75" stroke-linejoin="round"><path d="M4,0.4 L7.8,0.4 L9.4,2 L9.4,9.4 L1.8,9.4 L0.3,7.8 L0.3,5 L1.2,4.2 L4,4.2 Z"/><path d="M4,0.4 L5.4,1.8 L9.4,2 M5.4,1.8 L5.4,6 L1.8,6 L0.3,5 M1.8,6 L1.8,9.4"/></g><g transform="translate(329.2,450.2)" fill="none" stroke="#666" stroke-width="0.75" stroke-linejoin="round"><path d="M4,0.4 L7.8,0.4 L9.4,2 L9.4,9.4 L1.8,9.4 L0.3,7.8 L0.3,5 L1.2,4.2 L4,4.2 Z"/><path d="M4,0.4 L5.4,1.8 L9.4,2 M5.4,1.8 L5.4,6 L1.8,6 L0.3,5 M1.8,6 L1.8,9.4"/></g><g transform="translate(329.2,466.2)" fill="none" stroke="#666" stroke-width="0.75" stroke-linejoin="round"><path d="M4,0.4 L7.8,0.4 L9.4,2 L9.4,9.4 L1.8,9.4 L0.3,7.8 L0.3,5 L1.2,4.2 L4,4.2 Z"/><path d="M4,0.4 L5.4,1.8 L9.4,2 M5.4,1.8 L5.4,6 L1.8,6 L0.3,5 M1.8,6 L1.8,9.4"/></g><g transform="translate(329.2,482.6)" fill="none" stroke="#666" stroke-width="0.75" stroke-linejoin="round"><path d="M4,0.4 L7.8,0.4 L9.4,2 L9.4,9.4 L1.8,9.4 L0.3,7.8 L0.3,5 L1.2,4.2 L4,4.2 Z"/><path d="M4,0.4 L5.4,1.8 L9.4,2 M5.4,1.8 L5.4,6 L1.8,6 L0.3,5 M1.8,6 L1.8,9.4"/></g><polyline points="446.4,319.4 447.4,320.6 448.4,319.4" fill="none" stroke="#666" stroke-width="0.7"/><g stroke="#999" stroke-width="0.9"><line x1="449.8" y1="320.4" x2="457" y2="320.4"/><line x1="448.4" y1="323.4" x2="457" y2="323.4"/><line x1="448.4" y1="326.4" x2="457" y2="326.4" stroke="#a58aa0"/><line x1="448.4" y1="329.5" x2="457" y2="329.5"/><line x1="448" y1="322.6" x2="448" y2="330" stroke="#bbb" stroke-width="1.2"/></g></svg>
<svg class="s" style="left:0px;top:0px;" width="1199" height="631" viewBox="0 0 1199 631"><polygon points="1144.9,60.2 1148.6,65.4 1141.2,65.4" fill="#dce4ed"/><polygon points="1144.9,148.2 1148.6,143 1141.2,143" fill="#dce4ed"/><polygon points="1100.6,104.1 1105.6,100.2 1105.6,108" fill="#dce4ed"/><polygon points="1189.2,104.1 1184.2,100.2 1184.2,108" fill="#dce4ed"/><path d="M1130.6,64.4 Q1118,68 1113.6,75.2" fill="none" stroke="#dce4ed" stroke-width="3.4"/><polygon points="1110.2,71.8 1112.6,79.6 1118.4,75" fill="#dce4ed"/><path d="M1159.2,64.4 Q1171.8,68 1176.2,75.2" fill="none" stroke="#dce4ed" stroke-width="3.4"/><polygon points="1179.6,71.8 1177.2,79.6 1171.4,75" fill="#dce4ed"/><polygon points="1144.9,78.6 1169.8,91.0 1169.8,116.8 1144.9,129.4 1120.0,116.8 1120.0,91.0" fill="#dce4ed" stroke="#dce4ed" stroke-width="2" stroke-linejoin="round"/><polygon points="1144.9,82.8 1161.3,91.0 1144.9,99.3 1128.5,91.0" fill="#fcfdfe" stroke="#fcfdfe" stroke-width="3.2" stroke-linejoin="round"/><polygon points="1124.2,97.5 1140.7,105.8 1140.7,122.9 1124.2,114.6" fill="#fcfdfe" stroke="#fcfdfe" stroke-width="3.2" stroke-linejoin="round"/><polygon points="1149.1,105.8 1165.6,97.5 1165.6,114.6 1149.1,122.9" fill="#fcfdfe" stroke="#fcfdfe" stroke-width="3.2" stroke-linejoin="round"/><circle cx="1143.6" cy="101.6" r="3.4" fill="#fcfdfe"/><ellipse cx="1123.6" cy="89.8" rx="2" ry="1.4" fill="#fcfdfe"/><ellipse cx="1166.4" cy="90.6" rx="2" ry="1.4" fill="#fcfdfe"/><ellipse cx="1144.2" cy="126.4" rx="2" ry="1.4" fill="#fcfdfe"/><text transform="translate(1141.2,86.4) rotate(28)" font-size="5.4" fill="#555" font-family="Liberation Sans">Top</text><text transform="translate(1124.4,104.2) rotate(28)" font-size="6.4" fill="#444" font-family="Liberation Sans">Front</text><text transform="translate(1149.4,115.4) rotate(-24)" font-size="6.4" fill="#444" font-family="Liberation Sans" font-style="italic">Right</text><line x1="1118" y1="117.6" x2="1118.6" y2="81.6" stroke="#4b6fd0" stroke-width="0.8"/><line x1="1118" y1="117.6" x2="1140.4" y2="132.4" stroke="#e07050" stroke-width="0.8"/><line x1="1118" y1="117.6" x2="1149.6" y2="104" stroke="#7cc97c" stroke-width="0.7" stroke-dasharray="1.6,0.8"/><text x="1116" y="84" font-size="7" fill="#3454c0" font-family="Liberation Sans">Z</text><text x="1140.2" y="139.6" font-size="7" fill="#e0603a" font-family="Liberation Sans">X</text><text x="1149" y="106" font-size="5" fill="#7fd0d8" font-family="Liberation Sans">Y</text><path d="M1167.4,142.6 L1172.6,140.2 L1178.8,142 L1178.8,148.6 L1173.6,151 L1167.4,149.2 Z" fill="#aaa" stroke="#777" stroke-width="0.6"/><path d="M1167.4,142.6 L1173.4,144.4 L1178.8,142 L1172.6,140.2 Z" fill="#eee"/><path d="M1173.4,144.4 L1173.6,151 L1178.8,148.6 L1178.8,142 Z" fill="#888"/><polygon points="1184.4,144.4 1188.6,144.4 1186.5,146.4" fill="#333"/><rect x="1181" y="177" width="18.5" height="82.4" fill="#fefefe" stroke="#e2e4e8" stroke-width="0.8"/><line x1="1181" y1="197.6" x2="1199" y2="197.6" stroke="#e6e8eb" stroke-width="0.8"/><line x1="1181" y1="218.5" x2="1199" y2="218.5" stroke="#e6e8eb" stroke-width="0.8"/><line x1="1181" y1="239.2" x2="1199" y2="239.2" stroke="#e6e8eb" stroke-width="0.8"/><rect x="1181" y="266" width="18.5" height="206.8" fill="#fefefe" stroke="#e2e4e8" stroke-width="0.8"/><line x1="1181" y1="287.1" x2="1199" y2="287.1" stroke="#e6e8eb" stroke-width="0.8"/><line x1="1181" y1="307.2" x2="1199" y2="307.2" stroke="#e6e8eb" stroke-width="0.8"/><line x1="1181" y1="327.3" x2="1199" y2="327.3" stroke="#e6e8eb" stroke-width="0.8"/><line x1="1181" y1="349.2" x2="1199" y2="349.2" stroke="#e6e8eb" stroke-width="0.8"/><line x1="1181" y1="370.5" x2="1199" y2="370.5" stroke="#e6e8eb" stroke-width="0.8"/><line x1="1181" y1="390.5" x2="1199" y2="390.5" stroke="#e6e8eb" stroke-width="0.8"/><line x1="1181" y1="411.5" x2="1199" y2="411.5" stroke="#e6e8eb" stroke-width="0.8"/><line x1="1181" y1="431.6" x2="1199" y2="431.6" stroke="#e6e8eb" stroke-width="0.8"/><line x1="1181" y1="452.6" x2="1199" y2="452.6" stroke="#e6e8eb" stroke-width="0.8"/><g transform="translate(1185.2,181.2)"><path d="M1,8 L7,0.6 L13,6 L13,8 Z" fill="#999"/><rect x="0.5" y="8" width="12.6" height="4.2" fill="#fff" stroke="#999" stroke-width="0.7"/><rect x="3" y="9.2" width="2" height="2" fill="#999"/></g><g transform="translate(1185.2,202)"><rect x="0" y="0" width="6" height="5" fill="#4a86d8"/><path d="M2,0 V5 M4,0 V5 M0,2.5 H6" stroke="#cfe" stroke-width="0.5"/><path d="M4,6.4 L8.6,4 L13,6.2 L13,10.6 L8.6,12.6 L4,10.6 Z M4,6.4 L8.6,8.6 L13,6.2 M8.6,8.6 V12.6" fill="none" stroke="#555" stroke-width="0.8"/></g><g transform="translate(1185.2,222.4)"><rect x="0.4" y="0" width="6" height="4.6" fill="#777"/><path d="M2,0 V4.6 M3.6,0 V4.6 M5,0 V4.6 M0.4,2.3 H6.4" stroke="#e8e8e8" stroke-width="0.4"/><path d="M6.6,5.4 L9.6,4 L12.6,5.4 L12.6,9 L9.6,10.4 L6.6,9 Z M6.6,5.4 L9.6,6.8 L12.6,5.4 M9.6,6.8 V10.4" fill="none" stroke="#555" stroke-width="0.7"/><path d="M2.4,5.2 Q1,5.2 1,6.6 L1,8 Q1,8.8 0.2,8.8 Q1,8.8 1,9.6 L1,11 Q1,12.2 2.4,12.2" fill="none" stroke="#555" stroke-width="0.7"/><path d="M3.2,8.6 Q6,11.4 9.6,11.6" fill="none" stroke="#555" stroke-width="0.7"/></g><g transform="translate(1185.2,243.2)"><rect x="0.4" y="0" width="6" height="4.6" fill="#555"/><path d="M2,0 V4.6 M3.6,0 V4.6 M5,0 V4.6 M0.4,2.3 H6.4" stroke="#e8e8e8" stroke-width="0.4"/><path d="M2.2,5.6 Q0.6,8.4 2.2,11.8" fill="none" stroke="#333" stroke-width="1"/><path d="M11.6,5.6 Q13.2,8.4 11.6,11.8" fill="none" stroke="#333" stroke-width="1"/><path d="M4.6,7 L9.2,11 M9.2,7 L4.6,11" stroke="#222" stroke-width="1.1"/><circle cx="9.6" cy="6.8" r="0.8" fill="#222"/></g><rect x="1184.8" y="269.6" width="13.6" height="14.4" rx="2" fill="#e3e5e8"/><rect x="1184.8" y="289.7" width="13.6" height="14.4" rx="2" fill="#e3e5e8"/><rect x="1184.8" y="310.7" width="13.6" height="14.4" rx="2" fill="#e3e5e8"/><rect x="1184.8" y="330.8" width="13.6" height="14.4" rx="2" fill="#e3e5e8"/><rect x="1184.8" y="352.7" width="13.6" height="14.4" rx="2" fill="#e3e5e8"/><rect x="1184.8" y="373.2" width="13.6" height="14.4" rx="2" fill="#e3e5e8"/><rect x="1184.8" y="394.2" width="13.6" height="14.4" rx="2" fill="#e3e5e8"/><rect x="1184.8" y="415.2" width="13.6" height="14.4" rx="2" fill="#e3e5e8"/><rect x="1184.8" y="435.3" width="13.6" height="14.4" rx="2" fill="#e3e5e8"/><rect x="1184.8" y="455.3" width="13.6" height="14.4" rx="2" fill="#e3e5e8"/><g transform="translate(1186.2,271.6)" stroke="#6aa3e8" stroke-width="1"><line x1="0.5" y1="1.5" x2="10.5" y2="1.5"/><line x1="4" y1="4.5" x2="10.5" y2="4.5"/><line x1="0.5" y1="7.5" x2="8" y2="7.5"/><line x1="4" y1="10" x2="10.5" y2="10"/></g><g transform="translate(1186,291.7)"><rect x="0.5" y="4" width="4" height="7.6" rx="1" fill="#8fbff0" stroke="#3a78cc" stroke-width="0.7"/><rect x="4.5" y="2.5" width="3.6" height="9" rx="1" fill="#8fbff0" stroke="#3a78cc" stroke-width="0.7"/><rect x="8" y="0.5" width="3.6" height="11" rx="1" fill="#8fbff0" stroke="#3a78cc" stroke-width="0.7"/></g><g transform="translate(1186,312.3)"><path d="M0.6,6 L5.6,6 L5.6,0.6 L11.6,1.2 L11.6,11 L0.6,11 Z" fill="#8fbff0" stroke="#3a78cc" stroke-width="0.8"/><path d="M5.6,0.6 L7.4,2.2 L7.4,8 L0.6,8" fill="none" stroke="#3a78cc" stroke-width="0.6"/></g><g transform="translate(1186,332.40000000000003)"><rect x="0.6" y="1.6" width="11" height="10" rx="1" fill="#8fbff0" stroke="#3a78cc" stroke-width="0.8"/><rect x="0.6" y="1.6" width="11" height="2.6" fill="#3a78cc"/><path d="M3,0 V2.6 M9,0 V2.6" stroke="#3a78cc" stroke-width="1"/><polyline points="3.8,7.4 5.6,9 8.6,6" fill="none" stroke="#2a5ab0" stroke-width="0.8"/></g><g transform="translate(1186,353.9)"><path d="M0.6,3.6 L6,0.4 L11.6,3.6 L6,6.2 Z" fill="#111"/><path d="M1,5.4 L5.6,7.6 L5.6,12.2 L1,10 Z" fill="#fff" stroke="#333" stroke-width="0.4"/><path d="M6.4,7.6 L11.4,5 L11.4,10 L6.4,12.4 Z" fill="#36b04a"/><rect x="2" y="6" width="2" height="4" fill="#222"/></g><g transform="translate(1186,375.2)"><path d="M3,1 L9,1 L6,4.2 Z" fill="#44bb55"/><line x1="6" y1="4" x2="6" y2="9" stroke="#44bb55" stroke-width="1"/><path d="M1.6,10.6 Q6,7.4 10.4,10.6 Z" fill="#44bb55"/></g><rect x="1185.2" y="394.4" width="13" height="13.6" fill="#1a4fb5"/><text x="1191.7" y="405.0" font-size="8.6" font-weight="bold" fill="#fff" text-anchor="middle" font-family="Liberation Serif">MK</text><rect x="1185.6" y="418.4" width="12.2" height="8.6" rx="2.2" fill="#222"/><polygon points="1190.4,420.59999999999997 1193.8,422.7 1190.4,424.8" fill="#fff"/><rect x="1185.2" y="435.7" width="13" height="13.4" fill="#fff" stroke="#e05040" stroke-width="0.8"/><text x="1191.7" y="445.90000000000003" font-size="6" font-weight="bold" fill="#d43a2a" text-anchor="middle" font-family="Liberation Sans">VIS</text><circle cx="1191.6" cy="462.5" r="4.6" fill="#5cc05c"/><path d="M1190.4,459.7 V465.3 M1192.6,459.7 V465.3" stroke="#e8f5e8" stroke-width="0.7"/><g transform="translate(1161.5,599)"><path d="M0.4,6 L2.6,4.2 L11,4.2 L11,9.4 L0.4,9.4 Z" fill="#fff" stroke="#555" stroke-width="0.7"/><rect x="4.4" y="0.6" width="5" height="4.2" fill="#fff" stroke="#555" stroke-width="0.7"/><path d="M5.4,1.6 H8.4 M5.4,3 H8.4" stroke="#777" stroke-width="0.5"/><line x1="0.4" y1="7.4" x2="11" y2="7.4" stroke="#555" stroke-width="0.5"/></g><g transform="translate(1183,598)" stroke="#444" stroke-width="0.8" fill="none"><line x1="5.5" y1="0.6" x2="5.5" y2="9.2"/><line x1="1" y1="2.4" x2="10" y2="2.4"/><path d="M1,2.4 L-0.2,6 H2.2 Z M10,2.4 L8.8,6 H11.2 Z"/><line x1="1" y1="10.6" x2="10" y2="10.6" stroke-width="1.2"/><line x1="3" y1="9.2" x2="8" y2="9.2"/></g><g transform="translate(345.4,615.4)" fill="none" stroke="#555" stroke-width="0.75" stroke-linejoin="round"><path d="M0.4,3.8 Q0.5,2.4 2,2.4 L3.4,2.4 Q5,2.5 5,3.8 L5,11.2 L1.4,11.2 L0.4,10.4 Z"/><path d="M1.6,3.2 L1.6,11.2"/><path d="M5,1.6 Q5.2,0.4 6.8,0.4 L8.8,0.4 Q10.6,0.5 10.6,2.2 L10.6,11.2 L5,11.2"/><path d="M6.6,1 L6.6,11.2"/></g><g transform="translate(472.0,615.4)" fill="none" stroke="#555" stroke-width="0.75" stroke-linejoin="round"><path d="M0.4,3.8 Q0.5,2.4 2,2.4 L3.4,2.4 Q5,2.5 5,3.8 L5,11.2 L1.4,11.2 L0.4,10.4 Z"/><path d="M1.6,3.2 L1.6,11.2"/><path d="M5,1.6 Q5.2,0.4 6.8,0.4 L8.8,0.4 Q10.6,0.5 10.6,2.2 L10.6,11.2 L5,11.2"/><path d="M6.6,1 L6.6,11.2"/></g><g transform="translate(598.2,615.4)" fill="none" stroke="#555" stroke-width="0.75" stroke-linejoin="round"><path d="M0.4,3.8 Q0.5,2.4 2,2.4 L3.4,2.4 Q5,2.5 5,3.8 L5,11.2 L1.4,11.2 L0.4,10.4 Z"/><path d="M1.6,3.2 L1.6,11.2"/><path d="M5,1.6 Q5.2,0.4 6.8,0.4 L8.8,0.4 Q10.6,0.5 10.6,2.2 L10.6,11.2 L5,11.2"/><path d="M6.6,1 L6.6,11.2"/></g><g transform="translate(724.4,615.4)" fill="none" stroke="#555" stroke-width="0.75" stroke-linejoin="round"><path d="M0.4,3.8 Q0.5,2.4 2,2.4 L3.4,2.4 Q5,2.5 5,3.8 L5,11.2 L1.4,11.2 L0.4,10.4 Z"/><path d="M1.6,3.2 L1.6,11.2"/><path d="M5,1.6 Q5.2,0.4 6.8,0.4 L8.8,0.4 Q10.6,0.5 10.6,2.2 L10.6,11.2 L5,11.2"/><path d="M6.6,1 L6.6,11.2"/></g><g transform="translate(850.8,617.2)"><rect x="0.4" y="1" width="9.8" height="9.6" fill="#fff" stroke="#555" stroke-width="0.7"/><rect x="2" y="0.4" width="8.4" height="8.2" fill="#666"/><rect x="2.6" y="2.6" width="5.8" height="5" fill="#aaa"/><path d="M0.4,1 L2,2.4" stroke="#555" stroke-width="0.5"/></g><path d="M319.6,621.6 H328 M323.8,617.4 V625.8" stroke="#444" stroke-width="1.3"/><circle cx="347.8" cy="369.3" r="29.9" fill="#fbfa98"/><path d="M348.6,369.6 L348.6,380.6 L351,378.4 L352.8,382.4 L354.2,381.8 L352.4,377.8 L355.6,377.6 Z" fill="#fff" stroke="#555" stroke-width="0.7" stroke-linejoin="round"/></svg>
</body></html>
